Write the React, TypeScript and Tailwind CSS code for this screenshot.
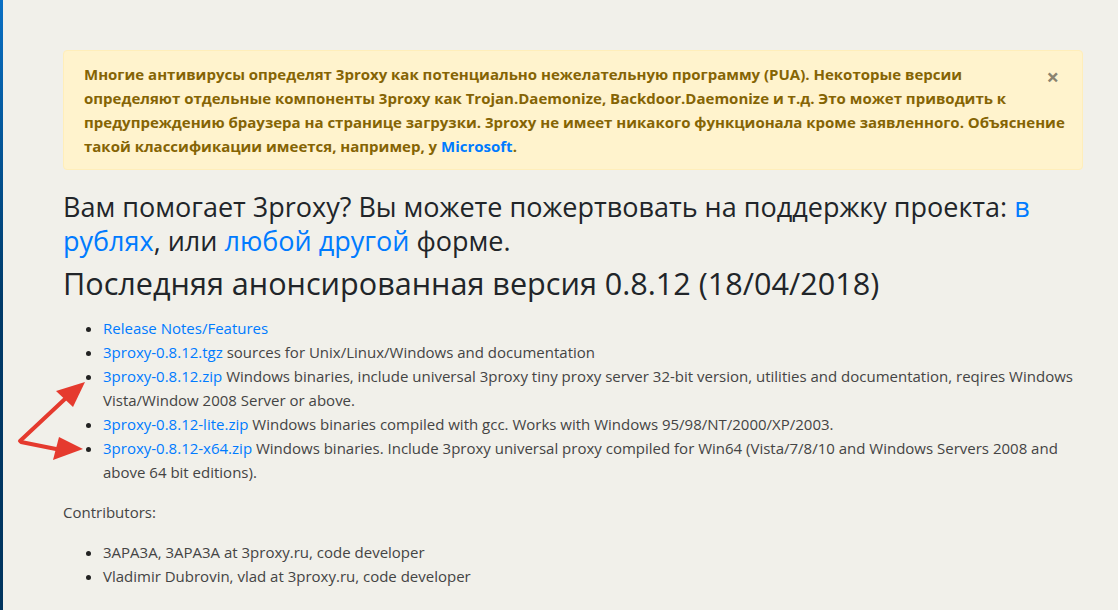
import React from 'react';

const font = { fontFamily: '"Open Sans", "Noto Sans", sans-serif' };

interface Release {
  file: string;
  text: React.ReactNode;
}

const releases: Release[] = [
  { file: 'Release Notes/Features', text: null },
  { file: '3proxy-0.8.12.tgz', text: ' sources for Unix/Linux/Windows and documentation' },
  {
    file: '3proxy-0.8.12.zip',
    text: (
      <>
        {' '}Windows binaries, include universal 3proxy tiny proxy server 32-bit version, utilities and documentation, reqires Windows
        <br />
        Vista/Window 2008 Server or above.
      </>
    ),
  },
  { file: '3proxy-0.8.12-lite.zip', text: ' Windows binaries compiled with gcc. Works with Windows 95/98/NT/2000/XP/2003.' },
  {
    file: '3proxy-0.8.12-x64.zip',
    text: (
      <>
        {' '}Windows binaries. Include 3proxy universal proxy compiled for Win64 (Vista/7/8/10 and Windows Servers 2008 and
        <br />
        above 64 bit editions).
      </>
    ),
  },
];

const contributors = ['3APA3A, 3APA3A at 3proxy.ru, code developer', 'Vladimir Dubrovin, vlad at 3proxy.ru, code developer'];

// red pointer arrows drawn over the download list
const Arrows = () => (
  <svg className="absolute left-0 top-[370px]" width="100" height="100" viewBox="0 0 100 100">
    <g stroke="#e53a2e" strokeWidth="4" strokeLinecap="round" fill="none">
      <line x1="20" y1="71" x2="66" y2="28" />
      <line x1="21" y1="72" x2="66" y2="81" />
    </g>
    <polygon points="85,12 56,21 73,37" fill="#e53a2e" />
    <polygon points="83,79 59,67 53,90" fill="#e53a2e" />
  </svg>
);

const App: React.FC = (): JSX.Element => {
  return (
    <div className="relative flex h-[610px] w-[1118px] overflow-hidden bg-[#f1f0ea]" style={font}>
      <div className="w-[3px] shrink-0 bg-gradient-to-b from-[#0a70c4] via-[#003a69] to-[#00345e]" />
      <Arrows />
      <div className="ml-[60px] w-[1020px] pt-[50px] text-[15px] leading-[24px] text-[#444]">
        <div className="relative mb-[20px] whitespace-nowrap rounded border border-[#ffeeba] bg-[#fff3cd] py-[11px] pl-[20px] pr-[24px] font-bold text-[#856404]">
          Многие антивирусы определят 3proxy как потенциально нежелательную программу (PUA). Некоторые версии
          <br />
          определяют отдельные компоненты 3proxy как Trojan.Daemonize, Backdoor.Daemonize и т.д. Это может приводить к
          <br />
          предупреждению браузера на странице загрузки. 3proxy не имеет никакого функционала кроме заявленного. Объяснение
          <br />
          такой классификации имеется, например, у <span className="text-[#007bff]">Microsoft</span>.
          <span className="absolute right-[23px] top-[13px] text-[22px] leading-[24px] font-bold text-[#8a8370]">×</span>
        </div>

        <h3 className="mb-[6px] whitespace-nowrap text-[27px] leading-[34px] text-[#212529]">
          Вам помогает 3proxy? Вы можете пожертвовать на поддержку проекта: <span className="text-[#007bff]">в</span>
          <br />
          <span className="text-[#007bff]">рублях</span>, или <span className="text-[#007bff]">любой другой</span> форме.
        </h3>
        <h2 className="mb-[14px] whitespace-nowrap text-[30.6px] leading-[38px] text-[#212529]">
          Последняя анонсированная версия 0.8.12 (18/04/2018)
        </h2>

        <ul className="mb-[16px] list-disc whitespace-nowrap pl-[40px] marker:text-[#222]">
          {releases.map((r) => (
            <li key={r.file}>
              <span className="text-[#007bff]">{r.file}</span>
              {r.text}
            </li>
          ))}
        </ul>

        <p className="mb-[16px]">Contributors:</p>
        <ul className="list-disc pl-[40px] marker:text-[#222]">
          {contributors.map((c) => (
            <li key={c}>{c}</li>
          ))}
        </ul>
      </div>
    </div>
  );
};

export default App;
